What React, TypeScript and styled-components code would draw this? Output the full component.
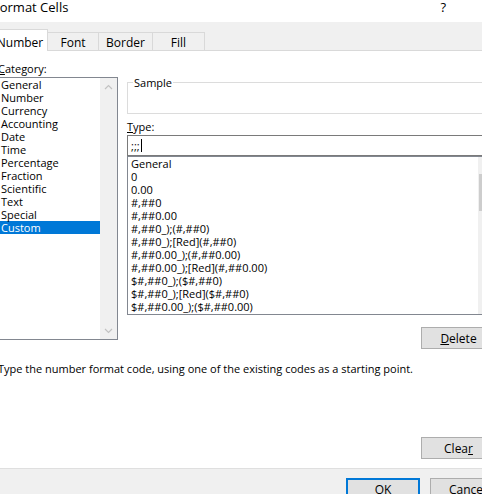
import { createGlobalStyle, styled } from "styled-components";

const GlobalStyle = createGlobalStyle`
  html, body {
    margin: 0;
    padding: 0;
    background: #ffffff;
    overflow: hidden;
  }
  body {
    font-family: "Open Sans", "Noto Sans", sans-serif;
    font-size: 11px;
    color: #000000;
  }
`;

const Dialog = styled.div`
  width: 520px;
  height: 530px;
  margin-left: -12px;
  display: flex;
  flex-direction: column;
  overflow: hidden;
`;

const TitleBar = styled.div`
  height: 22px;
  flex-shrink: 0;
  box-sizing: border-box;
  display: flex;
  align-items: flex-start;
  justify-content: space-between;
  padding: 0 62px 0 5px;
  font-size: 13px;
  line-height: 15px;
`;

const TabStrip = styled.div`
  height: 29px;
  flex-shrink: 0;
  box-sizing: border-box;
  background: #f0f0f0;
  border-bottom: 1px solid #d9d9d9;
  display: flex;
  align-items: flex-end;
  padding-left: 4px;
`;

const Tab = styled.div<{ $active?: boolean; $width: number }>`
  box-sizing: border-box;
  width: ${(p) => p.$width}px;
  height: ${(p) => (p.$active ? 22 : 18)}px;
  margin-bottom: ${(p) => (p.$active ? -1 : 0)}px;
  background: ${(p) => (p.$active ? "#ffffff" : "#f0f0f0")};
  border: 1px solid #d9d9d9;
  border-bottom: none;
  border-left: ${(p) => (p.$active ? "1px solid #d9d9d9" : "none")};
  display: flex;
  align-items: center;
  justify-content: center;
  padding-top: ${(p) => (p.$active ? 3 : 1)}px;
  font-size: 12px;
`;

const Body = styled.div`
  height: 417px;
  flex-shrink: 0;
  box-sizing: border-box;
  padding: 10px 12px 9px 10px;
  display: flex;
  flex-direction: column;
`;

const Main = styled.div`
  display: flex;
  gap: 9px;
  align-items: flex-start;
`;

const LeftCol = styled.div`
  width: 120px;
  display: flex;
  flex-direction: column;
`;

const RightCol = styled.div`
  flex: 1;
  display: flex;
  flex-direction: column;
  padding-top: 21px;
`;

const Label = styled.div<{ $gap?: number }>`
  line-height: 15px;
  margin-top: ${(p) => p.$gap ?? 0}px;
  margin-bottom: 1px;
`;

const ListBox = styled.div<{ $height: number }>`
  height: ${(p) => p.$height}px;
  box-sizing: border-box;
  border: 1px solid #828790;
  background: #ffffff;
  display: flex;
  overflow: hidden;
`;

const Items = styled.div<{ $pad: number }>`
  flex: 1;
  min-width: 0;
  & > div {
    padding-left: ${(p) => p.$pad}px;
  }
`;

const Row = styled.div<{ $selected?: boolean }>`
  height: 13px;
  line-height: 13px;
  white-space: nowrap;
  background: ${(p) => (p.$selected ? "#0078d7" : "transparent")};
  color: ${(p) => (p.$selected ? "#ffffff" : "#000000")};
`;

const ScrollTrack = styled.div<{ $start?: boolean }>`
  width: 17px;
  flex-shrink: 0;
  background: #f0f0f0;
  display: flex;
  flex-direction: column;
  justify-content: ${(p) => (p.$start ? "flex-start" : "space-between")};
`;

const ArrowCell = styled.div`
  height: 17px;
  display: flex;
  align-items: center;
  justify-content: center;
`;

const Thumb = styled.div`
  margin: 0 1px;
  height: 37px;
  background: #cdcdcd;
`;

const SampleBox = styled.div`
  position: relative;
  height: 32px;
  box-sizing: border-box;
  border: 1px solid #dcdcdc;
  border-right: none;
`;

const SampleLegend = styled.span`
  position: absolute;
  top: -8px;
  left: 5px;
  padding: 0 1px;
  background: #ffffff;
  line-height: 15px;
`;

const TypeInput = styled.div`
  height: 21px;
  box-sizing: border-box;
  border: 1px solid #7a7a7a;
  padding-left: 3px;
  display: flex;
  align-items: center;
`;

const Caret = styled.span`
  display: inline-block;
  width: 1px;
  height: 13px;
  margin-left: 1px;
  background: #000000;
`;

const ButtonRow = styled.div<{ $gap: number }>`
  display: flex;
  justify-content: flex-end;
  margin-top: ${(p) => p.$gap}px;
`;

const Button = styled.button<{ $default?: boolean; $width?: number }>`
  width: ${(p) => p.$width ?? 75}px;
  height: 22px;
  box-sizing: border-box;
  background: #e1e1e1;
  border: 1px solid ${(p) => (p.$default ? "#0078d7" : "#adadad")};
  box-shadow: ${(p) => (p.$default ? "inset 0 0 0 1px #0078d7" : "none")};
  font-family: "Open Sans", "Noto Sans", sans-serif;
  font-size: 12px;
  color: #000000;
  padding: 0;
  margin: 0;
`;

const Description = styled.div`
  margin-top: 12px;
  line-height: 15px;
  white-space: nowrap;
`;

const BottomRow = styled(ButtonRow)`
  margin-top: auto;
`;

const Footer = styled.div`
  flex: 1;
  background: #f0f0f0;
  border-top: 1px solid #dfdfdf;
  display: flex;
  align-items: flex-start;
  gap: 10px;
  padding: 9px 0 0 358px;
`;

const Chevron = ({ up }: { up?: boolean }) => (
  <svg width="9" height="6" viewBox="0 0 9 6">
    <path
      d={up ? "M1 5 L4.5 1.5 L8 5" : "M1 1 L4.5 4.5 L8 1"}
      fill="none"
      stroke="#c2c2c2"
      strokeWidth="1.2"
    />
  </svg>
);

const categories = [
  "General",
  "Number",
  "Currency",
  "Accounting",
  "Date",
  "Time",
  "Percentage",
  "Fraction",
  "Scientific",
  "Text",
  "Special",
  "Custom",
];

const formats = [
  "General",
  "0",
  "0.00",
  "#,##0",
  "#,##0.00",
  "#,##0_);(#,##0)",
  "#,##0_);[Red](#,##0)",
  "#,##0.00_);(#,##0.00)",
  "#,##0.00_);[Red](#,##0.00)",
  "$#,##0_);($#,##0)",
  "$#,##0_);[Red]($#,##0)",
  "$#,##0.00_);($#,##0.00)",
];

const tabs = [
  { label: "Number", width: 56 },
  { label: "Font", width: 51 },
  { label: "Border", width: 54 },
  { label: "Fill", width: 52 },
];

export default function App() {
  return (
    <>
      <GlobalStyle />
      <Dialog>
        <TitleBar>
          <span>Format Cells</span>
          <span>?</span>
        </TitleBar>
        <TabStrip>
          {tabs.map((t, i) => (
            <Tab key={t.label} $active={i === 0} $width={t.width}>
              {t.label}
            </Tab>
          ))}
        </TabStrip>
        <Body>
          <Main>
            <LeftCol>
              <Label>
                <u>C</u>ategory:
              </Label>
              <ListBox $height={263}>
                <Items $pad={2}>
                  {categories.map((c) => (
                    <Row key={c} $selected={c === "Custom"}>
                      {c}
                    </Row>
                  ))}
                </Items>
                <ScrollTrack>
                  <ArrowCell>
                    <Chevron up />
                  </ArrowCell>
                  <ArrowCell>
                    <Chevron />
                  </ArrowCell>
                </ScrollTrack>
              </ListBox>
            </LeftCol>
            <RightCol>
              <SampleBox>
                <SampleLegend>Sample</SampleLegend>
              </SampleBox>
              <Label $gap={5}>
                <u>T</u>ype:
              </Label>
              <TypeInput>
                ;;;
                <Caret />
              </TypeInput>
              <ListBox $height={159}>
                <Items $pad={3}>
                  {formats.map((f) => (
                    <Row key={f}>{f}</Row>
                  ))}
                </Items>
                <ScrollTrack $start>
                  <ArrowCell />
                  <Thumb />
                </ScrollTrack>
              </ListBox>
              <ButtonRow $gap={12}>
                <Button>
                  <u>D</u>elete
                </Button>
              </ButtonRow>
            </RightCol>
          </Main>
          <Description>
            Type the number format code, using one of the existing codes as a
            starting point.
          </Description>
          <BottomRow $gap={0}>
            <Button>
              Clea<u>r</u>
            </Button>
          </BottomRow>
        </Body>
        <Footer>
          <Button $default $width={74}>
            OK
          </Button>
          <Button>Cancel</Button>
        </Footer>
      </Dialog>
    </>
  );
}
